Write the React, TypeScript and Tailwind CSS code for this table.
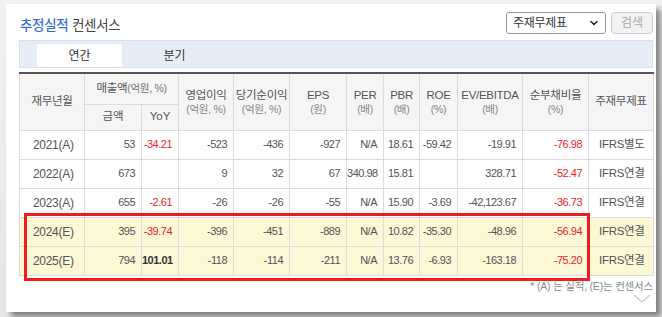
import { ChevronDown } from "lucide-react";

const font = "font-['Liberation_Sans','Noto_Sans_CJK_KR',sans-serif]";

type Row = {
  period: string;
  sales: string;
  yoy: string;
  yoyBold?: boolean;
  op: string;
  net: string;
  eps: string;
  per: string;
  pbr: string;
  roe: string;
  ev: string;
  debt: string;
  std: string;
  hl?: boolean;
};

const rows: Row[] = [
  { period: "2021(A)", sales: "53", yoy: "-34.21", op: "-523", net: "-436", eps: "-927", per: "N/A", pbr: "18.61", roe: "-59.42", ev: "-19.91", debt: "-76.98", std: "IFRS별도" },
  { period: "2022(A)", sales: "673", yoy: "", op: "9", net: "32", eps: "67", per: "340.98", pbr: "15.81", roe: "", ev: "328.71", debt: "-52.47", std: "IFRS연결" },
  { period: "2023(A)", sales: "655", yoy: "-2.61", op: "-26", net: "-26", eps: "-55", per: "N/A", pbr: "15.90", roe: "-3.69", ev: "-42,123.67", debt: "-36.73", std: "IFRS연결" },
  { period: "2024(E)", sales: "395", yoy: "-39.74", op: "-396", net: "-451", eps: "-889", per: "N/A", pbr: "10.82", roe: "-35.30", ev: "-48.96", debt: "-56.94", std: "IFRS연결", hl: true },
  { period: "2025(E)", sales: "794", yoy: "101.01", yoyBold: true, op: "-118", net: "-114", eps: "-211", per: "N/A", pbr: "13.76", roe: "-6.93", ev: "-163.18", debt: "-75.20", std: "IFRS연결", hl: true },
];

const widths = [65, 57, 37, 55, 56, 57, 37, 36, 38, 65, 66, 65];

function Num({ v, red, bold }: { v: string; red?: boolean; bold?: boolean }) {
  return (
    <td
      className={`border border-[#dcdcdc] pr-[6px] text-right text-[11px] tracking-[-0.5px] ${
        bold ? "font-bold text-[#333]" : red ? "text-[#e8232b]" : "text-[#555]"
      }`}
    >
      {v}
    </td>
  );
}

function Head({ t, sub }: { t: string; sub: string }) {
  return (
    <th rowSpan={2} className="border border-[#dcdcdc] align-middle font-normal leading-[14px] tracking-[-0.3px]">
      <div className="text-[11.5px] text-[#555]">{t}</div>
      <div className="text-[10.5px] text-[#888]">{sub}</div>
    </th>
  );
}

export default function App() {
  return (
    <div className={`${font} h-[317px] w-[662px] overflow-hidden bg-gradient-to-b from-[#f2f2f2] to-[#e6e6e6] pl-[6px] pt-[4px]`}>
      <div className="relative h-[308px] w-[650px] bg-white pl-[13px] pr-[3px] pt-[8px] shadow-[5px_5px_6px_rgba(0,0,0,0.45)]">
        <div className="flex h-[22px] items-center justify-between">
          <div className="mt-[5px] pl-[1px] text-[13.5px] leading-[16px] tracking-[-0.3px]">
            <span className="font-medium text-[#3b6fd1]">추정실적</span>{" "}
            <span className="text-[#444]">컨센서스</span>
          </div>
          <div className="flex items-center gap-[5px]">
            <div className="flex h-[22px] w-[100px] items-center justify-between rounded-[3px] border border-[#999] pl-[6px] pr-[5px] text-[12px] tracking-[-0.3px] text-[#333]">
              <span>주재무제표</span>
              <ChevronDown size={12} strokeWidth={3} className="text-[#222]" />
            </div>
            <div className="flex h-[22px] w-[42px] items-center justify-center rounded-[4px] border border-[#ccc] bg-[#f2f2f2] text-[12px] text-[#aaa]">
              검색
            </div>
          </div>
        </div>

        <div className="mt-[6px] flex h-[28px] items-end border border-[#d6e0ee] bg-[#e6edf7] pl-[17px]">
          <div className="flex h-[23px] w-[85px] items-center justify-center bg-white text-[12px] text-[#333]">
            연간
          </div>
          <div className="flex h-[23px] w-[105px] items-center justify-center text-[12px] text-[#333]">
            분기
          </div>
        </div>

        <table className="mt-[4px] w-[634px] table-fixed border-collapse border-t-2 border-t-[#555]">
          <colgroup>
            {widths.map((w, i) => (
              <col key={i} style={{ width: w }} />
            ))}
          </colgroup>
          <thead className="bg-[#f5f5f5]">
            <tr className="h-[31px]">
              <th rowSpan={2} className="border border-[#dcdcdc] border-t-0 text-[11.5px] font-normal tracking-[-0.3px] text-[#555]">
                재무년월
              </th>
              <th colSpan={2} className="border border-[#dcdcdc] border-t-0 text-[11.5px] font-normal tracking-[-0.3px] text-[#555]">
                매출액<span className="text-[10.5px] text-[#777]">(억원, %)</span>
              </th>
              <Head t="영업이익" sub="(억원, %)" />
              <Head t="당기순이익" sub="(억원, %)" />
              <Head t="EPS" sub="(원)" />
              <Head t="PER" sub="(배)" />
              <Head t="PBR" sub="(배)" />
              <Head t="ROE" sub="(%)" />
              <Head t="EV/EBITDA" sub="(배)" />
              <Head t="순부채비율" sub="(%)" />
              <th rowSpan={2} className="border border-[#dcdcdc] text-[11.5px] font-normal tracking-[-0.3px] text-[#555]">
                주재무제표
              </th>
            </tr>
            <tr className="h-[26px]">
              <th className="border border-[#dcdcdc] text-[11.5px] font-normal text-[#555]">금액</th>
              <th className="border border-[#dcdcdc] text-[11.5px] font-normal text-[#555]">YoY</th>
            </tr>
          </thead>
          <tbody>
            {rows.map((r) => (
              <tr key={r.period} className={`h-[29px] ${r.hl ? "bg-[#fcf8d6]" : "bg-white"}`}>
                <td className="border border-[#dcdcdc] pl-[13px] text-[12px] tracking-[-0.3px] text-[#555]">{r.period}</td>
                <Num v={r.sales} />
                <Num v={r.yoy} red={!r.yoyBold} bold={r.yoyBold} />
                <Num v={r.op} />
                <Num v={r.net} />
                <Num v={r.eps} />
                <Num v={r.per} />
                <Num v={r.pbr} />
                <Num v={r.roe} />
                <Num v={r.ev} />
                <Num v={r.debt} red />
                <td className="border border-[#dcdcdc] pl-[10px] text-[11.5px] tracking-[-0.3px] text-[#555]">{r.std}</td>
              </tr>
            ))}
          </tbody>
        </table>

        <div className="mt-[3px] text-right text-[10.5px] leading-[14px] tracking-[-0.2px] text-[#888]">
          * (A) 는 실적, (E)는 컨센서스
        </div>
        <div className="flex justify-end pr-[2px]">
          <svg width="18" height="10" viewBox="0 0 18 10" className="mt-[1px]">
            <path d="M1 1 L9 8 L17 1" fill="none" stroke="#c8c8c8" strokeWidth="1.3" />
          </svg>
        </div>

        <div className="absolute left-[18px] top-[209px] h-[68px] w-[566px] border-[3px] border-[#ee1c1c]" />
      </div>
    </div>
  );
}
